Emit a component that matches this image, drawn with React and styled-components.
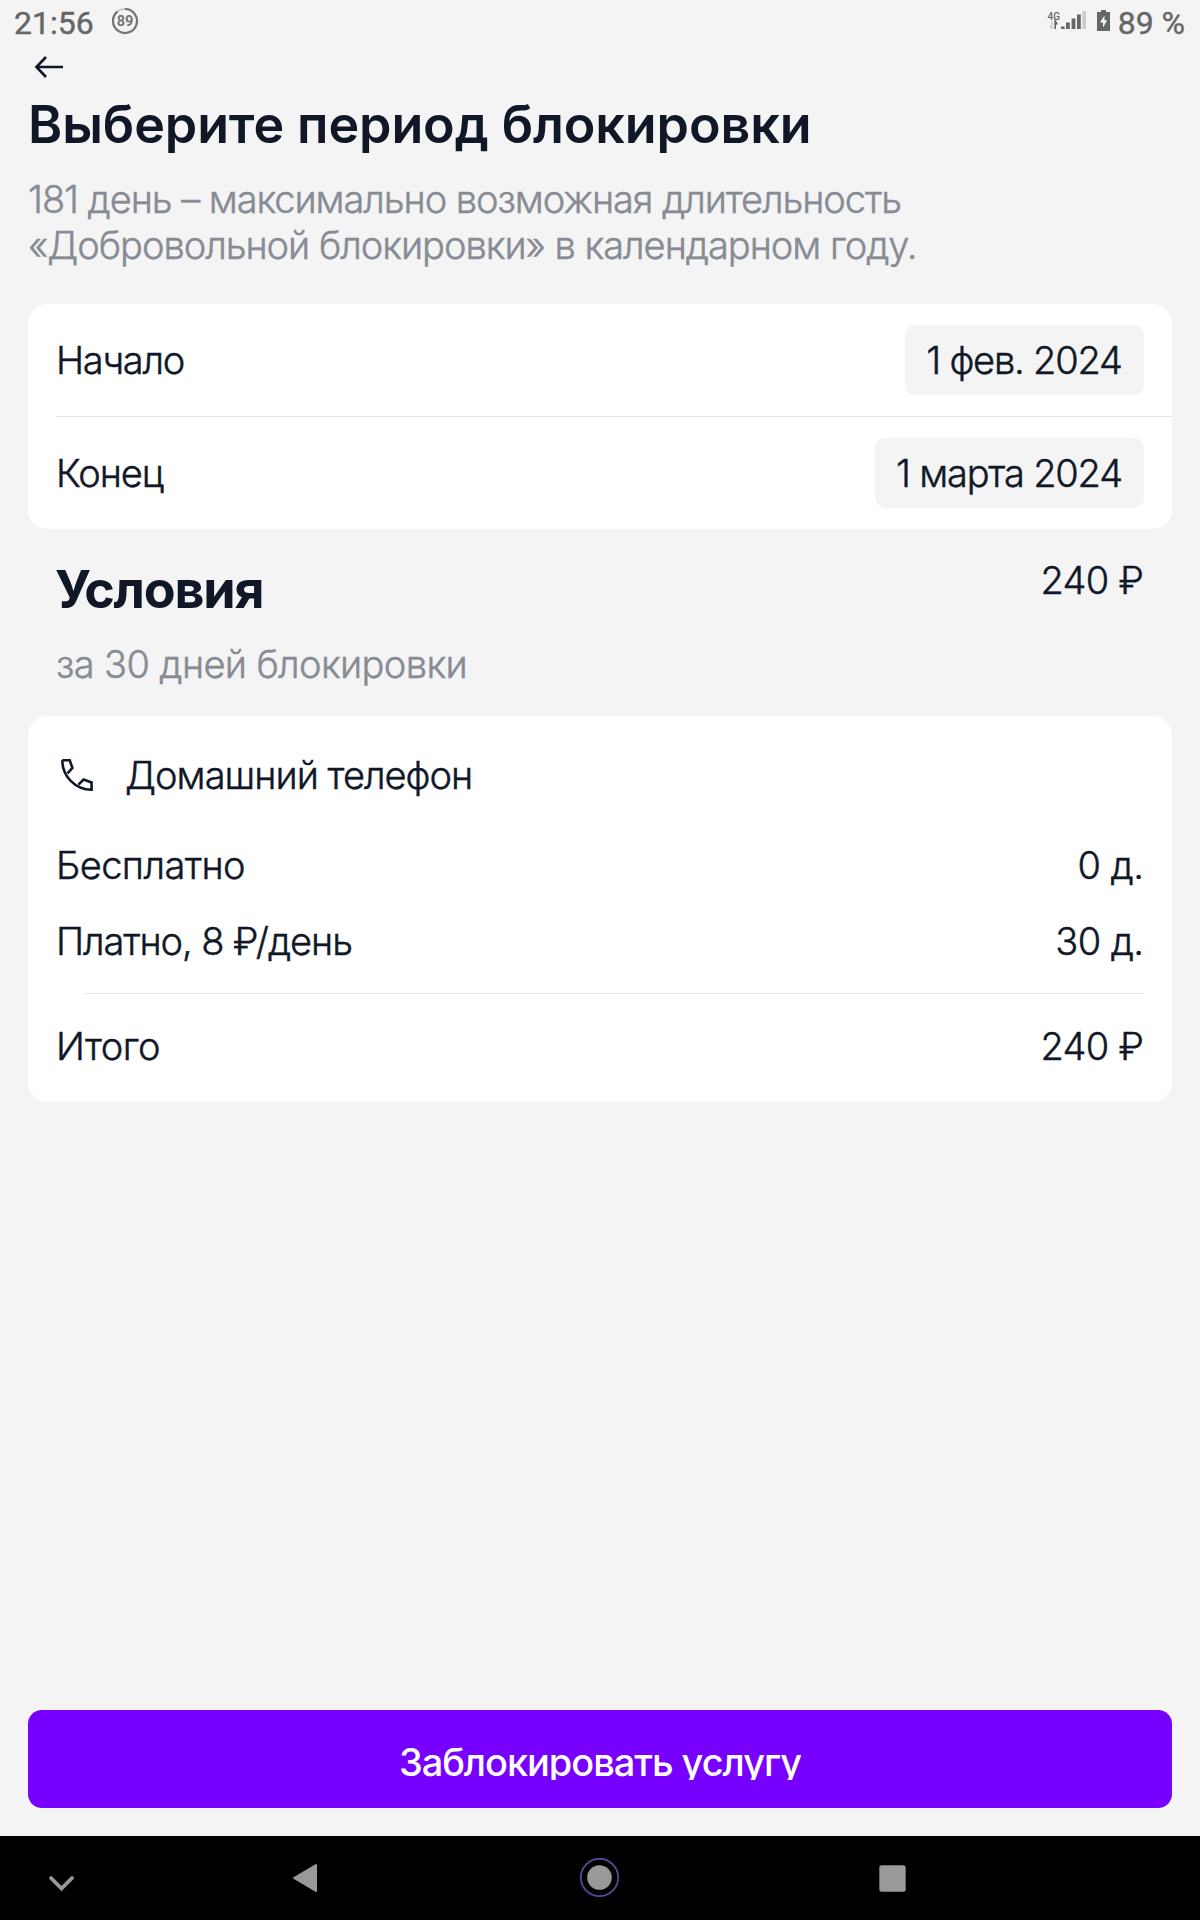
import React from "react";
import styled, { createGlobalStyle } from "styled-components";

const GlobalStyle = createGlobalStyle`
  body {
    margin: 0;
    background: #f4f4f4;
  }
  * {
    box-sizing: border-box;
  }
`;

const days = [
  { label: "Бесплатно", value: "0 д.", labelGap: -0.58, valueGap: -0.5 },
  { label: "Платно, 8 ₽/день", value: "30 д.", labelGap: -1.09, valueGap: -0.6 },
];

const App = () => {
  return (
    <Screen>
      <GlobalStyle />
      <StatusBar>
        <StatusGroup>
          <StatusText>21:56</StatusText>
          <PercentRing />
        </StatusGroup>
        <StatusGroup>
          <SignalIcon />
          <BatteryIcon />
          <StatusText>89 %</StatusText>
        </StatusGroup>
      </StatusBar>
      <BackBar>
        <BackIcon />
      </BackBar>
      <Content>
        <Title>Выберите период блокировки</Title>
        <Description>
          <Text $gap={-1.06}>181 день – максимально возможная длительность</Text>
          <br />
          <Text $gap={-1.02}>«Добровольной блокировки» в календарном году.</Text>
        </Description>
        <Card>
          <DateRow>
            <Text $gap={-1.3}>Начало</Text>
            <DateButton $width={239}>
              <Text $gap={-1.2}>1 фев. 2024</Text>
            </DateButton>
          </DateRow>
          <DateDivider />
          <DateRow>
            <Text $gap={-1.1}>Конец</Text>
            <DateButton $width={269}>
              <Text $gap={-1.2}>1 марта 2024</Text>
            </DateButton>
          </DateRow>
        </Card>
        <Terms>
          <div>
            <TermsTitle>Условия</TermsTitle>
            <TermsCaption>
              <Text $gap={-0.63}>за 30 дней блокировки</Text>
            </TermsCaption>
          </div>
          <Text $gap={-0.65}>240 ₽</Text>
        </Terms>
        <PriceCard>
          <ServiceRow>
            <PhoneIcon />
            <Text $gap={-0.97}>Домашний телефон</Text>
          </ServiceRow>
          {days.map((day) => (
            <PriceRow key={day.label}>
              <Text $gap={day.labelGap}>{day.label}</Text>
              <Text $gap={day.valueGap}>{day.value}</Text>
            </PriceRow>
          ))}
          <PriceDivider />
          <TotalRow>
            <Text $gap={-0.5}>Итого</Text>
            <Text $gap={-0.65}>240 ₽</Text>
          </TotalRow>
        </PriceCard>
        <BlockButton>
          <ButtonText>Заблокировать услугу</ButtonText>
        </BlockButton>
      </Content>
      <NavBar>
        <ChevronIcon />
        <NavBack />
        <NavHome />
        <NavRecent />
      </NavBar>
    </Screen>
  );
};

const PercentRing = () => (
  <RingSvg width="28" height="28" viewBox="0 0 28 28">
    <circle cx="14" cy="14" r="12" fill="none" stroke="#c8c8c8" strokeWidth="2" />
    <path
      d="M14 2A12 12 0 1 1 6.4 4.7"
      fill="none"
      stroke="#747474"
      strokeWidth="2.2"
    />
    <text
      x="14"
      y="19.3"
      textAnchor="middle"
      fontFamily="Roboto, sans-serif"
      fontSize="14.5"
      fontWeight="700"
      fill="#747474"
    >
      89
    </text>
  </RingSvg>
);

const SignalIcon = () => (
  <SignalSvg width="42" height="24" viewBox="0 0 42 24">
    <text
      x="0.5"
      y="10"
      fontFamily="Roboto, sans-serif"
      fontSize="10"
      fontWeight="500"
      fill="#666"
    >
      4G
    </text>
    <path d="M5 11v8M3 16l2 3" stroke="#cfcfcf" strokeWidth="1.6" fill="none" />
    <path d="M8.2 19v-8l2 3.5" stroke="#666" strokeWidth="1.6" fill="none" />
    <path
      d="M14 16.5h3.6v2.5h-3.6zM19 12.5h3.8v6.5h-3.8zM24.6 8.5h3.8v10.5h-3.8zM30 4.5h3.8v14.5h-3.8z"
      fill="#666"
    />
    <path d="M35.4 1h3.6v18h-3.6z" fill="#cbcbcb" />
  </SignalSvg>
);

const BatteryIcon = () => (
  <BatterySvg width="13" height="22" viewBox="0 0 13 22">
    <path d="M4 0h5v2h4v19H0V2h4z" fill="#666" />
    <path d="M7.5 5.5 3 12.5h3v5l4.2-7.2H7.5z" fill="#f4f4f4" />
  </BatterySvg>
);

const BackIcon = () => (
  <svg width="30" height="22" viewBox="0 0 30 22">
    <path
      d="M29 11H2.5M12 1 2.4 11l9.6 10"
      fill="none"
      stroke="#101828"
      strokeWidth="2.6"
    />
  </svg>
);

const PhoneIcon = () => (
  <svg width="34" height="34" viewBox="0 0 34 34">
    <path
      d="M2.3 2.3h7.4l2.7 7.6-4.9 5.4M2.3 2.3C2.3 18.5 15.5 31.7 31.6 31.7v-7.2l-8-2.9-5.1 5.1"
      fill="none"
      stroke="#101828"
      strokeWidth="2.6"
    />
  </svg>
);

const ChevronIcon = () => (
  <Chevron $left={48} width="28" height="18" viewBox="0 0 28 18">
    <path
      d="M3 3l10.5 10.5L24 3"
      fill="none"
      stroke="#999"
      strokeWidth="3.8"
      strokeLinecap="round"
    />
  </Chevron>
);

const NavBack = () => (
  <NavIcon $left={216} width="26" height="30" viewBox="0 0 26 30">
    <path
      d="M2 15 24 2v26z"
      fill="#999"
      stroke="#999"
      strokeWidth="2"
      strokeLinejoin="round"
    />
  </NavIcon>
);

const NavHome = () => (
  <NavIcon $left={262} width="40" height="40" viewBox="0 0 40 40">
    <circle cx="19.5" cy="19.5" r="18.7" fill="none" stroke="#504b9c" strokeWidth="1.8" />
    <circle cx="19.5" cy="19.5" r="12.3" fill="#999" />
  </NavIcon>
);

const NavRecent = () => (
  <NavIcon $left={259} width="27" height="27" viewBox="0 0 27 27">
    <rect x="0.3" y="0.3" width="26.4" height="26.4" rx="2.5" fill="#999" />
  </NavIcon>
);

const Screen = styled.div`
  display: flex;
  flex-direction: column;
  width: 1200px;
  height: 1920px;
  background: #f4f4f4;
  color: #101828;
  font-family: Inter, "Noto Sans", sans-serif;
  font-size: 38px;
  font-weight: 300;
  line-height: 46px;
`;

const StatusBar = styled.div`
  display: flex;
  justify-content: space-between;
  height: 46px;
  padding: 0 15px 0 14px;
`;

const StatusGroup = styled.div`
  display: flex;
`;

const StatusText = styled.span`
  color: #666;
  font-family: Roboto, sans-serif;
  font-size: 32px;
  font-weight: 400;
  line-height: 46px;
  white-space: pre;
  -webkit-text-stroke: 0.4px #666;
`;

const RingSvg = styled.svg`
  margin: 7px 0 0 17px;
`;

const SignalSvg = styled.svg`
  margin-top: 10px;
`;

const BatterySvg = styled.svg`
  margin: 10px 8px 0 8px;
`;

const BackBar = styled.div`
  display: flex;
  align-items: center;
  height: 42px;
  padding-left: 34px;
`;

const Content = styled.main`
  display: flex;
  flex: 1;
  flex-direction: column;
  padding: 7px 28px 28px;
`;

// the margin gives back the spacing that is added after the last letter
const Text = styled.span`
  margin-right: ${({ $gap }) => -$gap}px;
  letter-spacing: ${({ $gap }) => $gap}px;
  white-space: nowrap;
  -webkit-text-stroke: 0.45px currentColor;
`;

const Title = styled.h1`
  margin: 0;
  font-size: 52px;
  font-weight: 600;
  letter-spacing: -0.1px;
  line-height: 60px;
  white-space: nowrap;
`;

const Description = styled.p`
  margin: 21px 0 36px;
  color: #868b94;
`;

const Card = styled.section`
  border-radius: 20px;
  background: #fff;
`;

const DateRow = styled.div`
  display: flex;
  align-items: center;
  justify-content: space-between;
  height: 112px;
  padding: 0 28px;
`;

const DateButton = styled.div`
  display: flex;
  align-items: center;
  justify-content: center;
  width: ${({ $width }) => $width}px;
  height: 70px;
  border-radius: 10px;
  background: #f4f4f4;
`;

const DateDivider = styled.div`
  height: 1px;
  margin-left: 28px;
  background: #e6e7eb;
`;

const Terms = styled.div`
  display: flex;
  justify-content: space-between;
  height: 187px;
  padding: 28px 28px 0;
`;

const TermsTitle = styled.h2`
  margin: 3px 0 21px -1px;
  font-size: 52px;
  font-weight: 700;
  letter-spacing: -1.2px;
  line-height: 60px;
`;

const TermsCaption = styled.div`
  color: #868b94;
`;

const PriceCard = styled(Card)`
  padding: 7px 28px 4px;
`;

const PriceRow = styled.div`
  display: flex;
  align-items: center;
  justify-content: space-between;
  height: 76px;
`;

const ServiceRow = styled.div`
  display: flex;
  align-items: center;
  gap: 31px;
  height: 104px;
  padding-left: 4px;
`;

const PriceDivider = styled.div`
  height: 1px;
  margin: 14px 0 0 28px;
  background: #e8e8ea;
`;

const TotalRow = styled(PriceRow)`
  height: 104px;
`;

const BlockButton = styled.button`
  display: flex;
  justify-content: center;
  height: 98px;
  margin-top: auto;
  padding: 29px 0 0;
  border: 0;
  border-radius: 14px;
  background: #7700ff;
  color: #fff;
  font: inherit;
  font-weight: 500;
`;

const ButtonText = styled.span`
  height: 41px;
  overflow: hidden;
  letter-spacing: -1.05px;
  line-height: 46px;
  white-space: nowrap;
`;

const NavBar = styled.nav`
  display: flex;
  align-items: center;
  height: 84px;
  background: #000;
`;

const NavIcon = styled.svg`
  flex: none;
  margin-left: ${({ $left }) => $left}px;
`;

const Chevron = styled(NavIcon)`
  margin-top: 12px;
`;

export default App;
